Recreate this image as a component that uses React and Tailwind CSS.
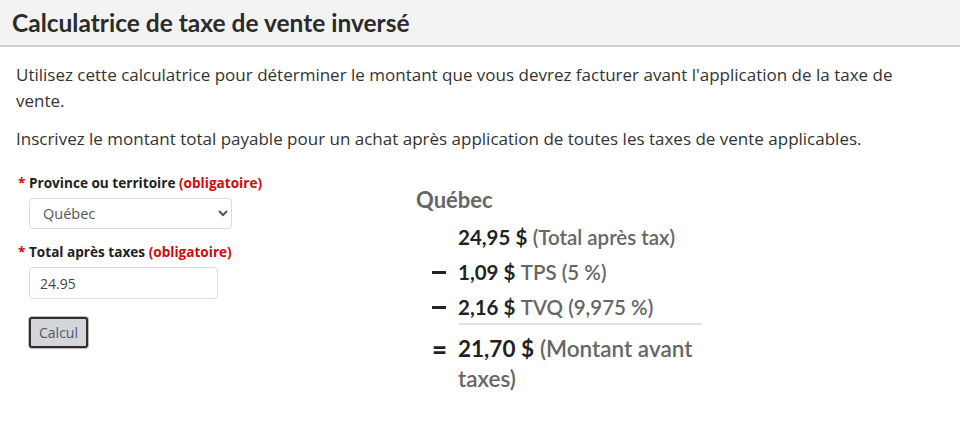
import { useState } from "react";

const Row = ({ op, amount, label, big, line }) => (
  <div className="flex items-start">
    <span className="w-[42px] pl-[16px] h-[30px] flex items-center text-[26px] font-black text-[#222] leading-[30px]">
      {op === "-" ? <span aria-label="moins" className="block w-[14px] h-[3px] bg-[#222] mt-[1px]" /> : op}
    </span>
    <p
      className={`w-[244px] ${big ? "text-[22.5px] leading-[30px]" : "text-[20.5px] leading-[30px]"} ${line ? "border-b-2 border-[#e3e3e3] pb-[1px]" : ""}`}>
      <span className="font-bold text-[#222]">{amount}</span>{" "}
      <span className="font-semibold text-[#666]">{label}</span>
    </p>
  </div>
);

const App = () => {
  const [province, setProvince] = useState("QC");
  const [total, setTotal] = useState("24.95");

  return (
    <div className="min-h-screen bg-white text-[#222] font-['Open_Sans',sans-serif]">
      <header className="h-[47px] bg-[#f3f3f3] border-b-2 border-[#cfcfcf] px-[12px] flex items-center">
        <h1 className="font-['Lato',sans-serif] font-bold text-[24.5px] text-[#2b2b2b] pt-[2px]">
          Calculatrice de taxe de vente inversé
        </h1>
      </header>

      <main className="px-[16px] pt-[15px]">
        <p className="text-[17px] leading-[26px] text-[#333]">
          Utilisez cette calculatrice pour déterminer le montant que vous devrez facturer avant l'application de la taxe de vente.
        </p>
        <p className="text-[17px] leading-[26px] text-[#333] mt-[12px]">
          Inscrivez le montant total payable pour un achat après application de toutes les taxes de vente applicables.
        </p>

        <div className="flex mt-[22px]">
          <form className="w-[400px] flex flex-col pl-[2px]" onSubmit={(e) => e.preventDefault()}>
            <label className="text-[13.6px] font-bold text-[#222] leading-[18px]">
              <span className="text-[#d3080c]">*</span> Province ou territoire{" "}
              <span className="text-[#d3080c]">(obligatoire)</span>
            </label>
            <select
              value={province}
              onChange={(e) => setProvince(e.target.value)}
              className="ml-[11px] mt-[6px] w-[203px] h-[31px] border border-[#dcdcdc] rounded-[4px] bg-white px-[9px] text-[14.5px] text-[#555]">
              <option value="QC">Québec</option>
              <option value="ON">Ontario</option>
            </select>

            <label className="text-[13.6px] font-bold text-[#222] leading-[18px] mt-[14px]">
              <span className="text-[#d3080c]">*</span> Total après taxes{" "}
              <span className="text-[#d3080c]">(obligatoire)</span>
            </label>
            <input
              value={total}
              onChange={(e) => setTotal(e.target.value)}
              className="ml-[11px] mt-[6px] w-[189px] h-[32px] border border-[#dcdcdc] rounded-[4px] bg-white px-[10px] text-[14px] text-[#444]"
            />

            <div className="ml-[11px] mt-[18px]">
              <button
                type="submit"
                className="w-[59px] h-[31px] border-2 border-[#2e2e2e] rounded-[3px] bg-[#d5d6da] text-[14px] text-[#4a5870] ring-1 ring-[#bbb]">
                Calcul
              </button>
            </div>
          </form>

          <div className="font-['Lato',sans-serif] pt-[12px]">
            <h3 className="text-[22px] font-bold text-[#666] leading-[28px] mb-[8px]">Québec</h3>
            <Row op="" amount={"24,95\u202F$"} label="(Total après tax)" />
            <div className="mt-[5px]" />
            <Row op="-" amount={"1,09\u202F$"} label="TPS (5 %)" />
            <div className="mt-[5px]" />
            <Row op="-" amount={"2,16\u202F$"} label="TVQ (9,975 %)" line />
            <div className="mt-[9px]" />
            <Row op="=" amount={"21,70\u202F$"} label="(Montant avant taxes)" big />
          </div>
        </div>
      </main>
    </div>
  );
};

export default App;
